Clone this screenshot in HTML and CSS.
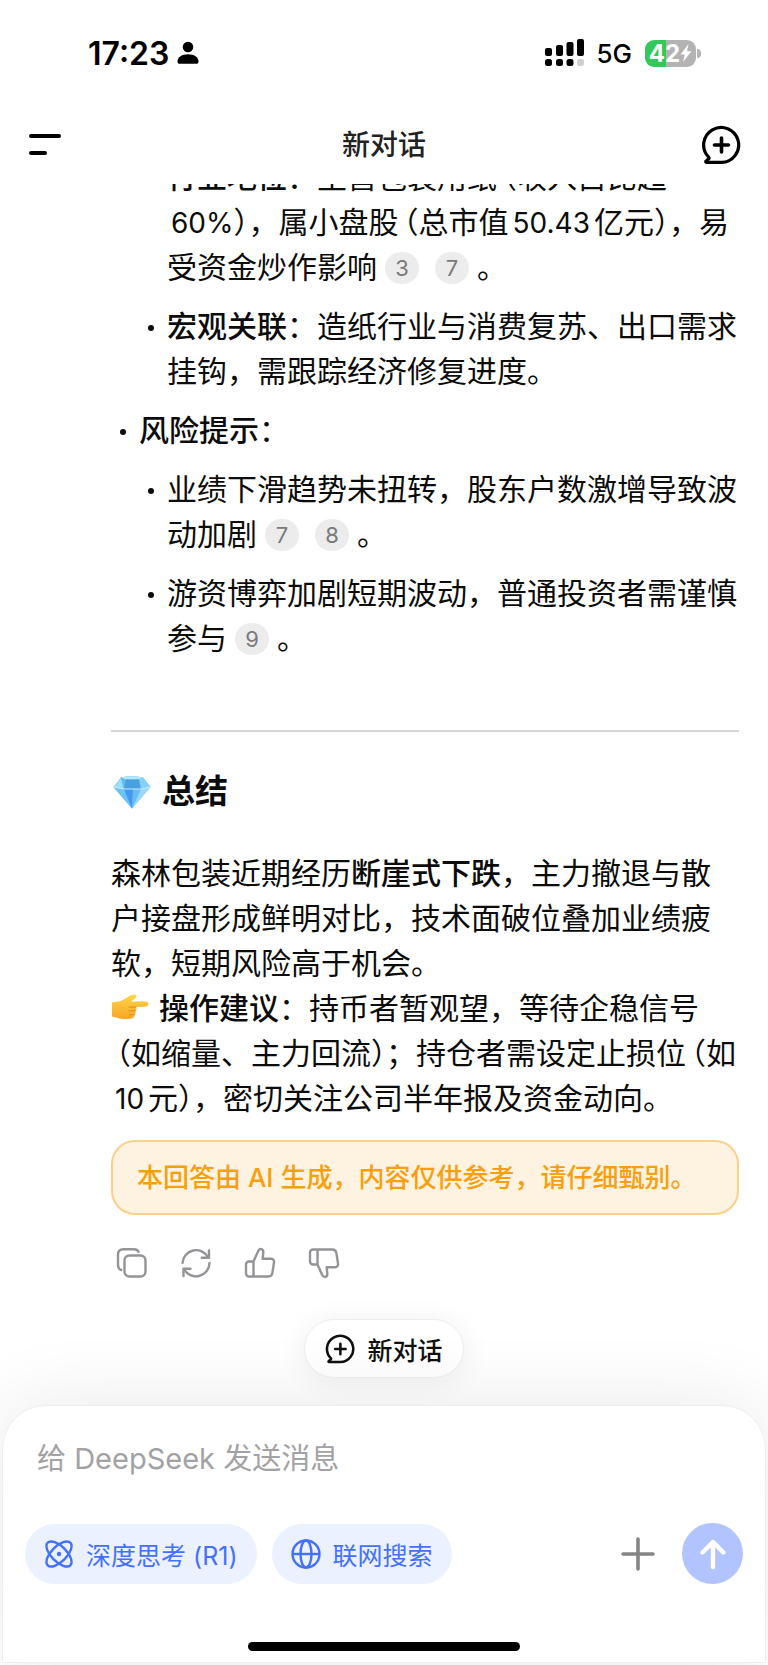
FILE: index.html
```html
<!DOCTYPE html>
<html lang="zh-CN">
<head>
<meta charset="UTF-8" />
<meta name="viewport" content="width=device-width, initial-scale=1" />
<title>新对话</title>
<link rel="stylesheet" href="styles.css">
</head>
<body>
<div class="app">
  <div class="status-bar">
    <div class="status-left">
      <span class="time">17:23</span>
      <svg width="22" height="24" viewBox="0 0 22 24" aria-hidden="true">
        <circle cx="11" cy="6" r="5.3"/>
        <path d="M0.5 20.5C0.5 16 5 13.2 11 13.2s10.500 2.800 10.500 7.300c0 1.600-.8 2.300-2.300 2.300H2.800c-1.500 0-2.300-.7-2.300-2.300z"/>
      </svg>
    </div>
    <div class="status-right">
      <svg width="40" height="28" viewBox="0 0 40 28" aria-hidden="true">
        <rect x="0" y="9" width="7" height="8" rx="2"/>
        <rect x="11" y="6" width="7" height="11" rx="2"/>
        <rect x="21.500" y="3" width="7" height="14" rx="2"/>
        <rect x="32" y="0" width="7" height="17" rx="2"/>
        <rect x="0" y="20" width="7" height="7" rx="2.500"/>
        <rect x="11" y="20" width="7" height="7" rx="2.500"/>
        <rect x="21.500" y="20" width="7" height="7" rx="2.500"/>
        <rect x="32" y="20" width="7" height="7" rx="2.500" fill="#cfcfcf"/>
      </svg>
      <span class="network">5G</span>
      <div class="battery">
        <span>42</span>
        <svg width="12" height="20" viewBox="0 0 12 20" aria-hidden="true"><path d="M8.500 1L0.500 11.500h4.300L3 19l8.500-10.800H7z" fill="#fff"/></svg>
      </div>
    </div>
  </div>

  <header class="top-bar">
    <button class="icon-btn" aria-label="菜单">
      <svg width="40" height="24" viewBox="0 0 40 24" stroke="#000" stroke-width="4" stroke-linecap="round"><path d="M4 3h28M4 20h14"/></svg>
    </button>
    <h1>新对话</h1>
    <button class="icon-btn" aria-label="新对话">
      <svg width="40" height="40" viewBox="0 0 40 40" fill="none" stroke="#000" stroke-width="3.200" stroke-linecap="round" stroke-linejoin="round">
        <path d="M20.500 37.400H5.500c-.9 0-1-.8-.4-1.300l2.600-2.300c.5-.5.500-1 0-1.600A17.500 17.500 0 1 1 20.500 37.400z"/>
        <path d="M20.500 13v14M13.500 20h14" stroke-width="3.600"/>
      </svg>
    </button>
  </header>

  <main class="chat">
    <article class="answer">
      <ul class="points">
        <li>
          <ul>
            <li><strong>行业地位</strong>：主营包装用纸<span class="paren open">（</span>收入占比超<span class="num percent">60%</span><span class="paren">）</span>，属小盘股<span class="paren open">（</span>总市值<span class="num">50.43</span>亿元<span class="paren">）</span>，易受资金炒作影响<a class="cite" href="#">3</a><a class="cite" href="#">7</a>。</li>
            <li><strong>宏观关联</strong>：造纸行业与消费复苏、出口需求挂钩，需跟踪经济修复进度。</li>
          </ul>
        </li>
        <li><strong>风险提示</strong>：
          <ul>
            <li>业绩下滑趋势未扭转，股东户数激增导致波动加剧<a class="cite" href="#">7</a><a class="cite" href="#">8</a>。</li>
            <li>游资博弈加剧短期波动，普通投资者需谨慎参与<a class="cite" href="#">9</a>。</li>
          </ul>
        </li>
      </ul>
      <hr>
      <h2>
        <svg class="emoji" width="42" height="34" viewBox="0 0 42 34" role="img" aria-label="钻石">
          <path d="M10 2.500Q21 0 32 2.500L39.500 12 21 33.500 2.500 12z" fill="#4fb0f5"/>
          <path d="M10 2.500L2.500 12l10.500 2z" fill="#9edcfb"/>
          <path d="M10 2.500L15 4l-2 10z" fill="#62bdf2"/>
          <path d="M10 2.500Q21 0 32 2.500L28 4.500H15z" fill="#b5e6fc"/>
          <path d="M15 4.500h13l2 9.500H13z" fill="#4a9fdd"/>
          <path d="M32 2.500L28 4.500 30 14l9.500-2z" fill="#86d0fa"/>
          <path d="M2.500 12l10.500 2 8 19.500z" fill="#6cc3fa"/>
          <path d="M13 14h9l-1 19.500z" fill="#4099ea"/>
          <path d="M22 14h8l-9 19.500z" fill="#6abcf9"/>
          <path d="M30 14l9.500-2L21 33.500z" fill="#9ad8fc"/>
          <path d="M2.500 12l10.500 2h17l9.500-2" fill="none" stroke="#c6edff" stroke-width="1"/>
        </svg>
        总结
      </h2>
      <p>森林包装近期经历<strong>断崖式下跌</strong>，主力撤退与散户接盘形成鲜明对比，技术面破位叠加业绩疲软，短期风险高于机会。<br>
        <svg class="emoji pointer" width="38" height="26" viewBox="0 0 38 26" role="img" aria-label="提示">
          <defs><linearGradient id="skin" x1="0" y1="0" x2="0" y2="1"><stop offset="0" stop-color="#ffd54a"/><stop offset="1" stop-color="#f6a623"/></linearGradient></defs>
          <path d="M1 8.500C5 7.500 8 8 11 6.500 15 4.500 19 .8 23 .6c2.500 0 3 2.200 1.200 3.600L20 7.600h14.500c3.700 0 3.700 5 0 5.100L25 13c.9 1.500.5 3-.7 3.700.9 1.500.2 3.200-1 3.800.6 2-.6 3.600-2.500 3.900-5 .9-10 1.100-13.800-.4L1 22.500z" fill="url(#skin)"/>
          <path d="M25 13l-7 .2M24.300 16.700l-6.300.3M23.300 20.500l-5 .4" fill="none" stroke="#e0891a" stroke-width="1" stroke-linecap="round"/>
        </svg><strong>操作建议</strong>：持币者暂观望，等待企稳信号<span class="paren open">（</span>如缩量、主力回流<span class="paren">）</span>；持仓者需设定止损位<span class="paren open">（</span>如<span class="num">10</span>元<span class="paren">）</span>，密切关注公司半年报及资金动向。</p>
      <div class="notice">本回答由 AI 生成，内容仅供参考，请仔细甄别。</div>
      <div class="actions">
        <button class="icon-btn" aria-label="复制">
          <svg width="32" height="32" viewBox="0 0 32 32"><rect x="8.500" y="8.500" width="21" height="21" rx="5"/><path d="M22.500 5c-.8-2-2.300-2.700-4.500-2.700H7.500c-3.500 0-5.500 2-5.500 5.500V18c0 2.500 1 4.300 3.200 5"/></svg>
        </button>
        <button class="icon-btn" aria-label="重新生成">
          <svg width="32" height="32" viewBox="0 0 32 32"><path d="M2.500 16A13.500 13.500 0 0 1 28 10.500M29.500 16A13.500 13.500 0 0 1 4 22"/><path d="M29 3.500v7.200h-7.200M3.500 29v-7.200h7"/></svg>
        </button>
        <button class="icon-btn" aria-label="赞">
          <svg width="32" height="32" viewBox="0 0 32 32"><path d="M9.500 29.500H5a3 3 0 0 1-3-3v-9a3 3 0 0 1 3-3h4.500zM9.500 14.500l4.600-10.300C15.800.6 19.500 2 19.300 5.500l-.6 6.300h8.300c2.300 0 3.400 1.700 3 3.700l-1.600 10.400c-.4 2.400-1.700 3.600-4 3.600H9.500"/></svg>
        </button>
        <button class="icon-btn" aria-label="踩">
          <svg width="32" height="32" viewBox="0 0 32 32"><path d="M9.500 2.500H5a3 3 0 0 0-3 3v9a3 3 0 0 0 3 3h4.500zM9.500 17.500l4.600 10.300c1.700 3.600 5.400 2.200 5.200-1.300l-.6-6.300h8.300c2.300 0 3.400-1.700 3-3.700L28.400 6.100c-.4-2.400-1.700-3.600-4-3.600H9.500"/></svg>
        </button>
      </div>
    </article>
    <button class="new-chat">
      <svg width="30" height="30" viewBox="0 0 40 40" fill="none" stroke="#111" stroke-width="3.400" stroke-linecap="round" stroke-linejoin="round">
        <path d="M20.500 37.400H5.500c-.9 0-1-.8-.4-1.300l2.600-2.300c.5-.5.500-1 0-1.600A17.500 17.500 0 1 1 20.500 37.400z"/>
        <path d="M20.500 13v14M13.500 20h14"/>
      </svg>
      新对话
    </button>
  </main>

  <form class="composer">
    <input type="text" class="message" aria-label="消息" placeholder="给 DeepSeek 发送消息">
    <div class="tools">
      <button type="button" class="pill">
        <svg width="30" height="30" viewBox="0 0 30 30" fill="none" stroke="#4470ff" stroke-width="2.400">
          <ellipse cx="15" cy="15" rx="16" ry="7.600" transform="rotate(45 15 15)"/>
          <ellipse cx="15" cy="15" rx="16" ry="7.600" transform="rotate(-45 15 15)"/>
          <circle cx="15" cy="15" r="2.200" fill="#4470ff" stroke="none"/>
        </svg>
        深度思考 (R1)
      </button>
      <button type="button" class="pill">
        <svg width="30" height="30" viewBox="0 0 30 30" fill="none" stroke="#4470ff" stroke-width="2.400">
          <circle cx="15" cy="15" r="13.500"/>
          <ellipse cx="15" cy="15" rx="5.500" ry="13.500"/>
          <path d="M1.500 15h27"/>
        </svg>
        联网搜索
      </button>
      <button type="button" class="icon-btn attach" aria-label="添加">
        <svg width="34" height="34" viewBox="0 0 34 34" stroke="#868686" stroke-width="3.600" stroke-linecap="round"><path d="M17 2v30M2 17h30"/></svg>
      </button>
      <button type="submit" class="send" aria-label="发送">
        <svg width="28" height="32" viewBox="0 0 28 32" fill="none" stroke="#fff" stroke-width="4.400" stroke-linecap="round" stroke-linejoin="round"><path d="M14 29V4M3.500 14.500L14 4l10.500 10.500"/></svg>
      </button>
    </div>
    <div class="home-indicator"></div>
  </form>
</div>
</body>
</html>
```

FILE: styles.css
```css
*, *::before, *::after {
  box-sizing: border-box;
}
body {
  margin: 0;
  font-family: Inter, "Noto Sans CJK SC", sans-serif;
  font-size: 30px;
  line-height: 45px;
  color: #0c0c0c;
  background: #fff;
}
button {
  font-family: inherit;
  border: none;
  cursor: pointer;
}
svg {
  display: block;
  flex-shrink: 0;
}
strong {
  font-weight: 500;
}
.app {
  height: 100vh;
  display: flex;
  flex-direction: column;
  overflow: hidden;
}
.icon-btn {
  background: none;
  padding: 0;
}

/* Status bar */
.status-bar {
  height: 106px;
  flex-shrink: 0;
  display: flex;
  align-items: center;
  justify-content: space-between;
  padding: 0 68px 0 88px;
  color: #000;
}
.status-left,
.status-right {
  display: flex;
  align-items: center;
}
.status-left {
  gap: 8px;
}
.time {
  font-size: 32px;
  font-weight: 600;
}
.network {
  font-size: 26px;
  font-weight: 500;
  margin: 0 13px 0 11px;
}
.battery {
  position: relative;
  display: flex;
  align-items: center;
  justify-content: center;
  width: 51px;
  height: 27px;
  margin-right: 4px;
  border-radius: 9px;
  background: linear-gradient(to right, #34c759 42%, #b3b3b3 42%);
  color: #fff;
  font-size: 24px;
  font-weight: 700;
  line-height: 27px;
}
.battery::after {
  content: "";
  position: absolute;
  right: -5px;
  top: 9px;
  width: 4px;
  height: 9px;
  border-radius: 0 4px 4px 0;
  background: #b3b3b3;
}

/* Top bar */
.top-bar {
  height: 78px;
  flex-shrink: 0;
  display: flex;
  align-items: center;
  justify-content: space-between;
  padding: 0 27px;
}
.top-bar h1 {
  margin: 0;
  font-size: 28px;
  font-weight: 500;
  color: #222;
}

/* Conversation, pinned to the newest line */
.chat {
  flex: 1;
  min-height: 0;
  overflow: hidden;
  display: flex;
  flex-direction: column;
  justify-content: flex-end;
  align-items: center;
  padding-bottom: 27px;
}
.answer {
  align-self: stretch;
  padding: 0 29px 0 111px;
}
.answer ul {
  list-style: none;
  margin: 0;
  padding: 0;
}
.answer li {
  position: relative;
  margin-top: 14px;
  padding-left: 28px;
}
.answer li::before {
  content: "";
  position: absolute;
  left: 9px;
  top: 21px;
  width: 6px;
  height: 6px;
  border-radius: 50%;
  background: #0c0c0c;
}
.num {
  font-size: 28px;
  line-height: 28px;
  margin: 0 4px;
}
.percent {
  margin-right: 0;
}
.paren {
  font-feature-settings: "halt";
}
.paren.open {
  margin-left: 5px;
}
.cite {
  display: inline-block;
  min-width: 34px;
  height: 32px;
  margin: 0 8px;
  border-radius: 16px;
  background: #ececec;
  color: #7a7a7a;
  font-size: 22px;
  line-height: 32px;
  text-align: center;
  text-decoration: none;
  vertical-align: 2px;
}
.answer hr {
  height: 2px;
  margin: 69px 0 37px;
  border: none;
  background: #d4d5d9;
}
.answer h2 {
  display: flex;
  align-items: center;
  gap: 9px;
  margin: 0 0 37px;
  font-size: 33px;
  font-weight: 600;
}
.answer p {
  margin: 0;
}
.pointer {
  display: inline-block;
  margin-right: 10px;
  vertical-align: -1px;
}
.notice {
  margin-top: 19px;
  padding: 14px 24px;
  border: 2px solid #fad08c;
  border-radius: 24px;
  background: #fef2e0;
  color: #f79f0d;
  font-size: 26px;
  font-weight: 500;
  line-height: 43px;
}
.actions {
  display: flex;
  gap: 32px;
  margin: 32px 0 40px 5px;
}
.actions svg {
  fill: none;
  stroke: #949498;
  stroke-width: 2.4;
  stroke-linecap: round;
  stroke-linejoin: round;
}
.new-chat {
  flex-shrink: 0;
  display: flex;
  align-items: center;
  gap: 12px;
  height: 59px;
  padding: 0 20px;
  border: 1px solid #eee;
  border-radius: 30px;
  background: #fff;
  box-shadow: 0 4px 30px rgb(0 0 0 / 0.07);
  color: #111;
  font-size: 25px;
  font-weight: 500;
}

/* Composer */
.composer {
  flex-shrink: 0;
  margin: 0 2px 2px;
  padding: 30px 22px 11px;
  border: 1px solid #eee;
  border-radius: 44px 44px 0 0;
  background: #fff;
  box-shadow: 0 0 80px rgb(0 0 0 / 0.09);
}
.message {
  display: block;
  width: 100%;
  height: 45px;
  padding: 0 12px;
  border: none;
  outline: none;
  background: none;
  font-family: inherit;
  font-size: 29px;
  color: #0c0c0c;
}
.message::placeholder {
  color: #a2a2a4;
}
.tools {
  display: flex;
  align-items: center;
  gap: 15px;
  margin-top: 42px;
}
.pill {
  display: flex;
  align-items: center;
  gap: 12px;
  height: 60px;
  padding: 0 19px;
  border-radius: 30px;
  background: #ebf1ff;
  color: #4470ff;
  font-size: 25px;
  white-space: nowrap;
}
.attach {
  margin-left: auto;
}
.send {
  display: flex;
  align-items: center;
  justify-content: center;
  width: 61px;
  height: 61px;
  margin-left: 12px;
  padding: 0;
  border-radius: 50%;
  background: #b2c4ff;
}
.home-indicator {
  width: 38%;
  height: 9px;
  margin: 58px auto 0;
  border-radius: 5px;
  background: #000;
}
```
